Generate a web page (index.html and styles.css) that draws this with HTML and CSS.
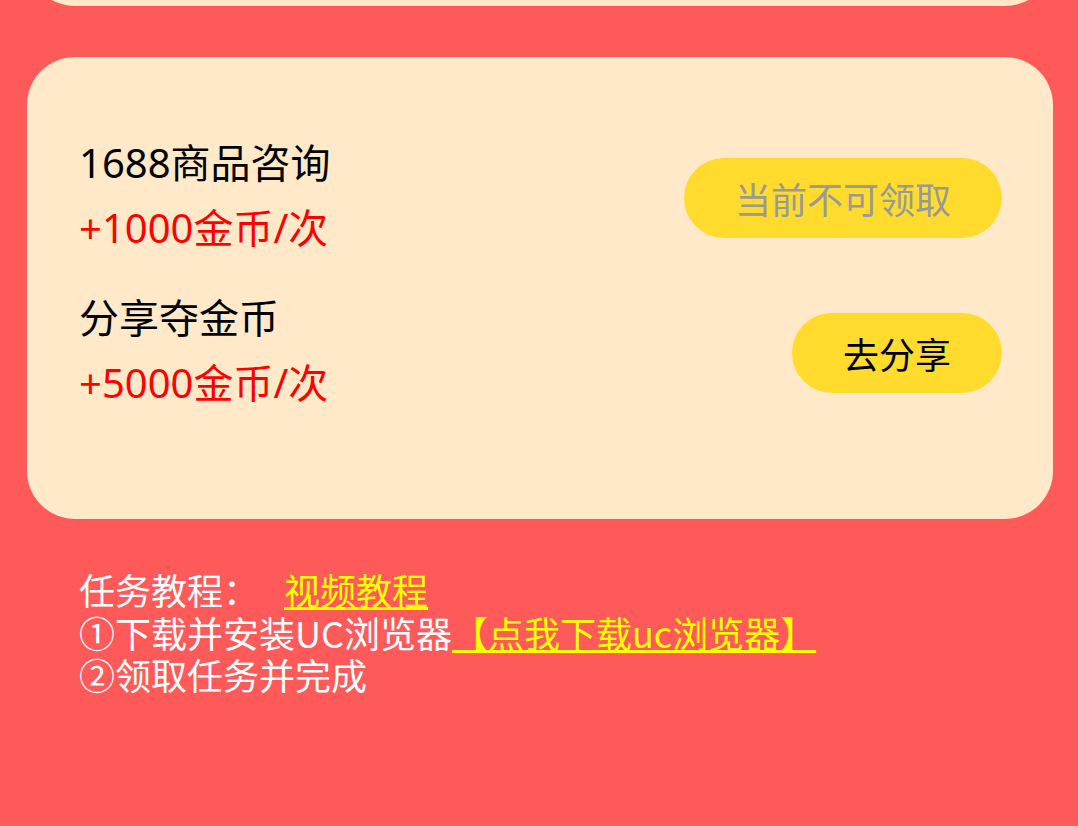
FILE: index.html
```html
<!DOCTYPE html>
<html lang="zh-CN">
<head>
<meta charset="utf-8">
<title>任务</title>
<link rel="stylesheet" href="styles.css">
</head>
<body>
<div class="page">
  <div class="card card-top"></div>
  <div class="card card-tasks">
    <div class="task">
      <div class="task-info">
        <div class="task-title">1688商品咨询</div>
        <div class="task-reward">+1000金币/次</div>
      </div>
      <div class="btn btn-disabled">当前不可领取</div>
    </div>
    <div class="task task-second">
      <div class="task-info">
        <div class="task-title">分享夺金币</div>
        <div class="task-reward">+5000金币/次</div>
      </div>
      <div class="btn">去分享</div>
    </div>
  </div>
  <div class="guide">
    <div class="guide-line">任务教程：<a class="guide-link guide-video" href="#">视频教程</a></div>
    <div class="guide-line">①下载并安装UC浏览器<a class="guide-link" href="#">【点我下载uc浏览器】</a></div>
    <div class="guide-line">②领取任务并完成</div>
  </div>
</div>
</body>
</html>
```

FILE: styles.css
```css
html, body {
  margin: 0;
  padding: 0;
}
body {
  background: #ff5a5a;
  font-family: "Noto Sans CJK SC", "Noto Sans", sans-serif;
  height: 826px;
  overflow: hidden;
}
.page {
  padding: 0 25px 0 27px;
}
.card {
  background: #ffe9c8;
  border-radius: 48px;
}
.card-top {
  height: 100px;
  margin-top: -94px;
}
.card-tasks {
  margin-top: 51px;
  padding: 82px 51px 112px 52px;
}
.task {
  display: flex;
  justify-content: space-between;
  align-items: center;
}
.task-second {
  margin-top: 42px;
}
.task-info {
  font-family: "Noto Sans", "Noto Sans CJK SC", sans-serif;
}
.task-title {
  font-size: 40px;
  line-height: 48px;
  color: #000;
}
.task-reward {
  font-size: 40px;
  line-height: 48px;
  color: #ff0000;
  margin-top: 17px;
}
.btn {
  height: 80px;
  line-height: 80px;
  border-radius: 40px;
  padding: 0 51px;
  margin-top: 4px;
  background: #ffdb2e;
  font-size: 36px;
  color: #000;
}
.btn-disabled {
  color: #999999;
}
.guide {
  margin-top: 49px;
  padding-left: 52px;
  color: #ffffff;
  font-size: 36px;
}
.guide-line {
  height: 42.5px;
  line-height: 42.5px;
}
.guide-link {
  color: #ffff00;
  text-decoration: underline;
}
.guide-video {
  margin-left: 25px;
}
```
